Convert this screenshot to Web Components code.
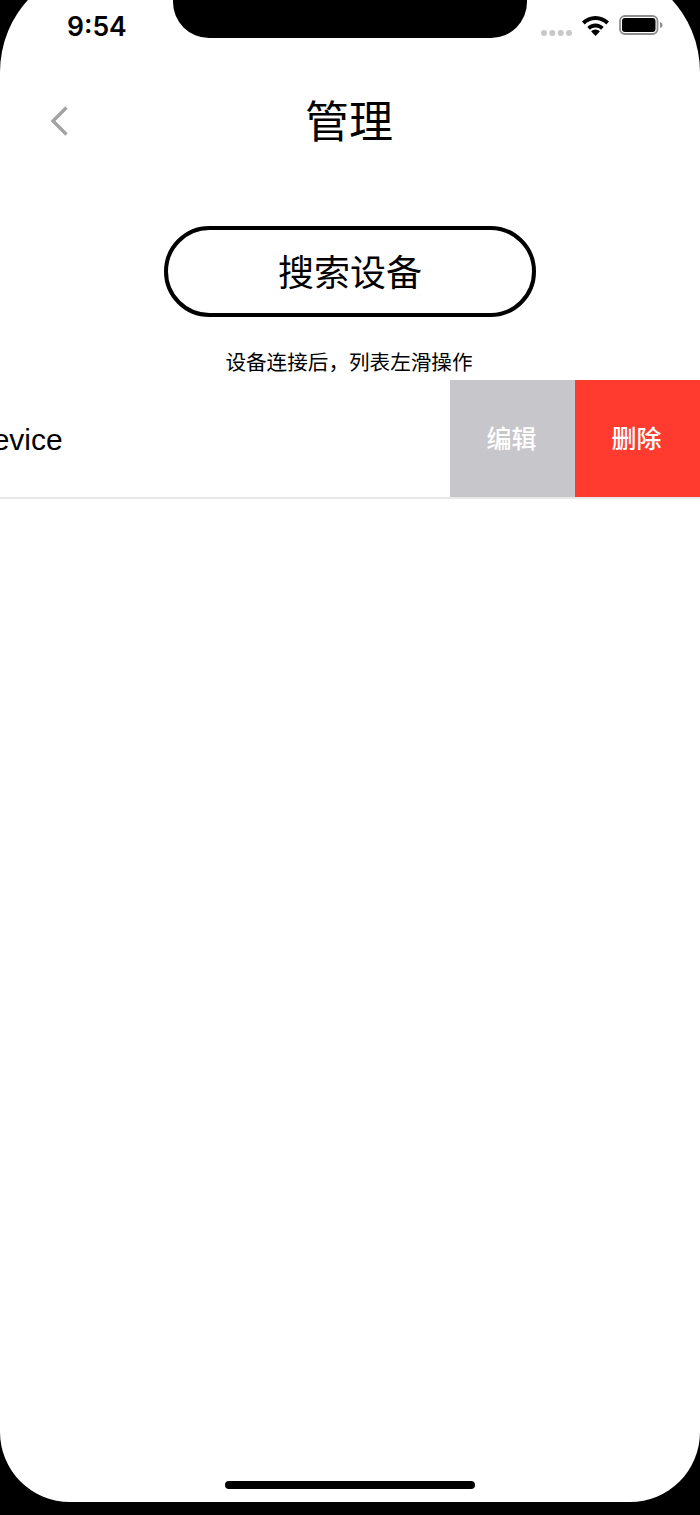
<!DOCTYPE html>
<html lang="zh">
<head>
<meta charset="utf-8">
<title>管理</title>
<style>
  html, body { margin: 0; height: 1515px; background: #000; overflow: hidden; }
  body { font-family: "Noto Sans CJK SC", sans-serif; color: #000; }
</style>
</head>
<body>
<device-screen>
  <status-bar slot="status" time="9:54"></status-bar>
  <nav-header title="管理"></nav-header>
  <search-button>搜索设备</search-button>
  <p-hint>设备连接后，列表左滑操作</p-hint>
  <swipe-row name="Device"></swipe-row>
</device-screen>

<script>
class DeviceScreen extends HTMLElement {
  constructor() {
    super();
    this._root = this.attachShadow({ mode: 'open' });
  }

  connectedCallback() {
    this._root.innerHTML = `
      <style>
        /* the top corners run off the picture, so the box starts above it */
        :host {
          display: flex;
          flex-direction: column;
          position: relative;
          box-sizing: border-box;
          height: 1537px;
          margin-top: -35px;
          padding-top: 35px;
          background: #fff;
          border-radius: 107px 107px 70px 70px;
          overflow: hidden;
        }

        .notch {
          position: absolute;
          top: 35px;
          left: 173px;
          width: 354px;
          height: 38px;
          background: #000;
          border-radius: 0 0 36px 36px;
        }

        .home {
          position: absolute;
          left: 225px;
          bottom: 13px;
          width: 250px;
          height: 8px;
          background: #000;
          border-radius: 4px;
        }
      </style>
      <slot name="status"></slot>
      <slot></slot>
      <div class="notch"></div>
      <div class="home"></div>
    `;
  }
}

class StatusBar extends HTMLElement {
  constructor() {
    super();
    this._root = this.attachShadow({ mode: 'open' });
  }

  connectedCallback() {
    this._root.innerHTML = `
      <style>
        :host {
          display: flex;
          align-items: center;
          justify-content: space-between;
          height: 52px;
          padding: 0 37px 0 67px;
        }

        .time {
          font: 600 26.500px/1 Inter, "Liberation Sans", sans-serif;
          color: #000;
        }

        .icons {
          display: flex;
          align-items: center;
          gap: 10px;
        }

        svg { display: block; }
      </style>
      <span class="time">${this.getAttribute('time')}</span>
      <div class="icons">
        <svg width="31" height="6" viewBox="0 0 31 6" style="margin-top:14px">
          <g fill="#c8c8c8">
            <circle cx="3" cy="3" r="3"/><circle cx="11.300" cy="3" r="3"/>
            <circle cx="19.700" cy="3" r="3"/><circle cx="28" cy="3" r="3"/>
          </g>
        </svg>
        <svg width="27" height="20" viewBox="0 0 27 20">
          <path d="M0 5.600C3.500 2.100 8.300 0 13.500 0S23.500 2.100 27 5.600l-2.700 2.800C21.500 5.700 17.700 4 13.500 4S5.500 5.700 2.700 8.400z" fill="#000"/>
          <path d="M5.300 11C7.400 8.900 10.300 7.600 13.500 7.600s6.100 1.300 8.200 3.400L19 13.700c-1.400-1.400-3.300-2.200-5.500-2.200s-4.100.8-5.500 2.200z" fill="#000"/>
          <path d="M9.200 15.400c1.100-1.100 2.600-1.800 4.300-1.800s3.200.7 4.300 1.800L13.500 20z" fill="#000"/>
        </svg>
        <svg width="44" height="20" viewBox="0 0 44 20" style="margin-bottom:2px">
          <rect x="1" y="1" width="37.500" height="18" rx="5" fill="none" stroke="#8e8e8e" stroke-width="1.800"/>
          <rect x="3" y="3" width="33.500" height="14" rx="3" fill="#000"/>
          <path d="M41 7c1.500.4 2.500 1.500 2.500 3s-1 2.600-2.500 3z" fill="#8e8e8e"/>
        </svg>
      </div>
    `;
  }
}

class NavHeader extends HTMLElement {
  constructor() {
    super();
    this._root = this.attachShadow({ mode: 'open' });
  }

  connectedCallback() {
    this._root.innerHTML = `
      <style>
        :host {
          display: grid;
          grid-template-columns: 1fr auto 1fr;
          align-items: center;
          height: 138px;
        }

        .back {
          display: block;
          margin-left: 48px;
        }

        h1 {
          margin: 0 2px 4px 0;
          font-size: 44px;
          font-weight: 400;
          line-height: 1;
        }
      </style>
      <svg class="back" width="24" height="34" viewBox="0 0 24 34">
        <path d="M18.500 3.500L5 17l13.500 13.500" fill="none" stroke="#a3a3a3" stroke-width="3.400"/>
      </svg>
      <h1>${this.getAttribute('title')}</h1>
    `;
  }
}

class SearchButton extends HTMLElement {
  constructor() {
    super();
    this._root = this.attachShadow({ mode: 'open' });
  }

  connectedCallback() {
    this._root.innerHTML = `
      <style>
        :host {
          display: flex;
          align-items: center;
          justify-content: center;
          box-sizing: border-box;
          width: 372px;
          height: 91px;
          margin: 36px auto 0;
          padding-bottom: 3px;
          border: 4px solid #000;
          border-radius: 46px;
          font-size: 36px;
        }
      </style>
      <slot></slot>
    `;
  }
}

class PHint extends HTMLElement {
  constructor() {
    super();
    this._root = this.attachShadow({ mode: 'open' });
  }

  connectedCallback() {
    this._root.innerHTML = `
      <style>
        :host {
          display: block;
          height: 63px;
          padding: 29px 2px 0 0;
          box-sizing: border-box;
          font-size: 20.600px;
          line-height: 30px;
          text-align: center;
        }
      </style>
      <slot></slot>
    `;
  }
}

class SwipeRow extends HTMLElement {
  constructor() {
    super();
    this._root = this.attachShadow({ mode: 'open' });
  }

  connectedCallback() {
    this._root.innerHTML = `
      <style>
        :host {
          display: block;
          overflow: hidden;
        }

        .track {
          display: flex;
          box-sizing: border-box;
          width: 950px;
          height: 119px;
          margin-left: -250px;
          border-bottom: 2px solid #e8e8e8;
        }

        .content {
          flex: 1;
          display: flex;
          align-items: center;
          box-sizing: border-box;
          padding: 3px 0 0 221px;
          font: 30px "Liberation Sans", sans-serif;
        }

        .action {
          flex: 0 0 125px;
          display: flex;
          align-items: center;
          justify-content: center;
          box-sizing: border-box;
          padding: 0 2px 3px 0;
          color: #fff;
          font-size: 25px;
          font-weight: 500;
        }

        .edit { background: #c7c6cb; }
        .delete { background: #ff3b30; }
      </style>
      <div class="track">
        <div class="content">${this.getAttribute('name')}</div>
        <div class="action edit">编辑</div>
        <div class="action delete">删除</div>
      </div>
    `;
  }
}

window.customElements.define('device-screen', DeviceScreen);
window.customElements.define('status-bar', StatusBar);
window.customElements.define('nav-header', NavHeader);
window.customElements.define('search-button', SearchButton);
window.customElements.define('p-hint', PHint);
window.customElements.define('swipe-row', SwipeRow);
</script>
</body>
</html>
